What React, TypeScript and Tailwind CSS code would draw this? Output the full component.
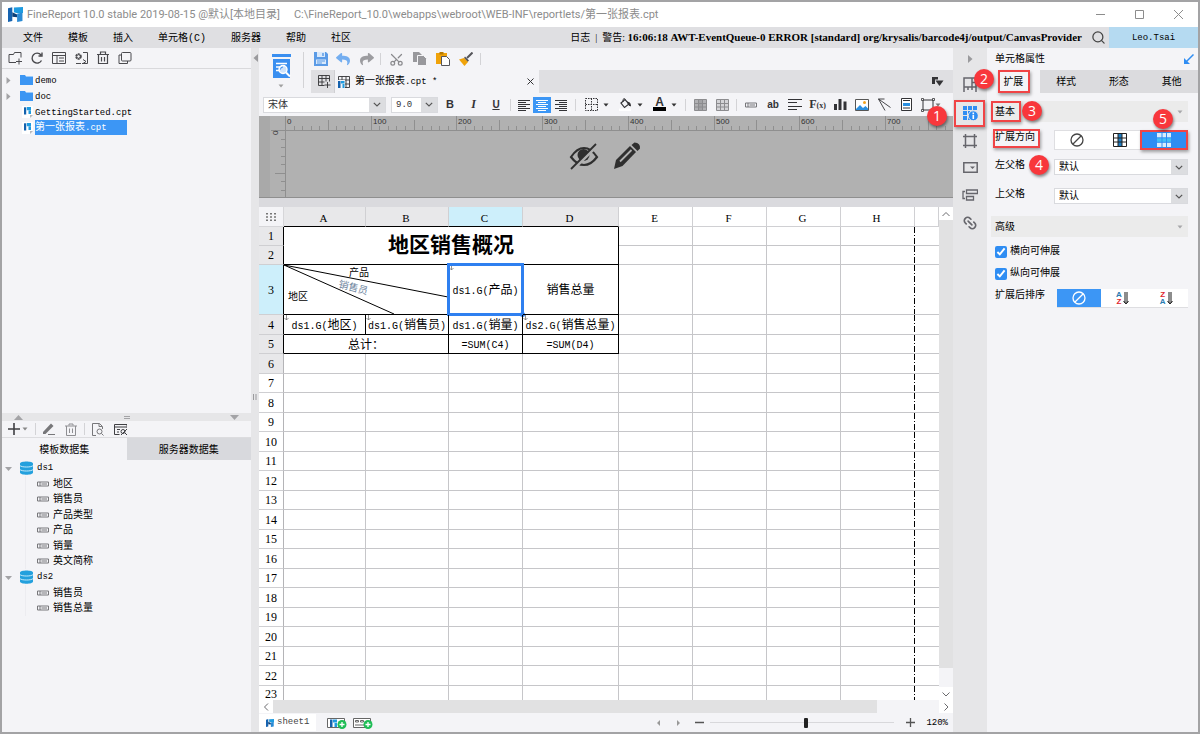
import { Fragment, useState } from 'react';
import type { ReactNode } from 'react';
import { FaReply, FaShare } from 'react-icons/fa';
import { Link2, Scissors, Search } from 'lucide-react';

const MONO = "font-['Liberation_Mono','Noto_Sans_CJK_SC',monospace]";

/** Sets Latin runs smaller than the Chinese text around them. */
function Mixed({ text, latin = 'text-[9px]' }: { text: string; latin?: string }) {
  return (
    <>
      {text.split(/([\x20-\x7e]+)/).map((part, i) =>
        i % 2 ? (
          <span key={i} className={latin}>
            {part}
          </span>
        ) : (
          <Fragment key={i}>{part}</Fragment>
        ),
      )}
    </>
  );
}

function IconButton({ label, className = 'h-full w-[22px]', children }: { label: string; className?: string; children: ReactNode }) {
  return (
    <button type="button" aria-label={label} className={`flex shrink-0 items-center justify-center ${className}`}>
      {children}
    </button>
  );
}

function Svg({ w = 14, h = 14, children, className = '' }: { w?: number; h?: number; children: ReactNode; className?: string }) {
  return (
    <svg width={w} height={h} viewBox={`0 0 ${w} ${h}`} fill="none" stroke="currentColor" className={`shrink-0 ${className}`} aria-hidden="true">
      {children}
    </svg>
  );
}

function Sep({ className = 'mx-[3px] h-3' }: { className?: string }) {
  return <span className={`w-px shrink-0 bg-[#d3d3d6] ${className}`} />;
}

function Caret({ className = 'text-[#333]' }: { className?: string }) {
  return (
    <Svg w={6} h={4} className={className}>
      <path d="M0.5 0.5h5L3 3.5z" fill="currentColor" stroke="none" />
    </Svg>
  );
}

function Chevron() {
  return (
    <Svg w={8} h={5} className="text-[#555]">
      <path d="M0.8 0.8L4 4l3.2-3.2" strokeWidth="1.2" />
    </Svg>
  );
}

function Badge({ n, className }: { n: number; className: string }) {
  return (
    <span
      className={`pointer-events-none absolute z-20 flex size-5 items-center justify-center rounded-full bg-[#f8373c] font-['Open_Sans',sans-serif] text-[14px] leading-none text-white shadow-[1px_2px_3px_rgba(0,0,0,0.45)] ${className}`}
    >
      {n}
    </span>
  );
}

function Frame({ className }: { className: string }) {
  return <span className={`pointer-events-none absolute z-10 border-2 border-[#f04446] shadow-[1px_2px_3px_rgba(0,0,0,0.35)] ${className}`} />;
}

function Logo({ size = 14 }: { size?: number }) {
  return (
    <svg width={size} height={size} viewBox="0 0 14 14" aria-hidden="true" className="shrink-0">
      <path d="M0 1.2L4 0.2V13L0 14z" fill="#1663b0" />
      <path d="M4 5L8.500 7V9.500L4 9z" fill="#0c3f77" />
      <path d="M5.500 0.500L14 0V5.500L9.500 6L5.500 5z" fill="#1e9be0" />
      <path d="M8.500 6.500L13.500 5V13L8.500 14z" fill="#2a8ad4" />
    </svg>
  );
}

/* ---------- Title and menu ---------- */

function TitleBar() {
  return (
    <header className="flex h-[25px] shrink-0 items-center bg-white pl-[6px] font-['Roboto','Noto_Sans_CJK_SC',sans-serif] text-[11px] text-[#8c8c8c]">
      <Logo size={15} />
      <h1 className="ml-1 whitespace-pre">FineReport 10.0 stable 2019-08-15 @默认[本地目录]</h1>
      <span className="ml-[14px] whitespace-pre">C:\FineReport_10.0\webapps\webroot\WEB-INF\reportlets/第一张报表.cpt</span>
      <div className="ml-auto flex h-full">
        <IconButton label="最小化" className="h-full w-[39px]"><Svg w={9} h={9}><path d="M0 4.5h9" /></Svg></IconButton>
        <IconButton label="最大化" className="h-full w-[39px]"><Svg w={9} h={9}><path d="M0.5 0.5h8v8h-8z" /></Svg></IconButton>
        <IconButton label="关闭" className="h-full w-[39px]"><Svg w={9} h={9}><path d="M0 0l9 9M9 0L0 9" /></Svg></IconButton>
      </div>
    </header>
  );
}

const MENUS = ['文件', '模板', '插入', '单元格(C)', '服务器', '帮助', '社区'];

function MenuBar() {
  return (
    <nav className="flex h-[21px] shrink-0 items-center bg-[#dfdfe2] pl-[21px]">
      <div className="flex gap-[25px] pt-[2px]">
        {MENUS.map((m) => (
          <button key={m} type="button" className="whitespace-nowrap">
            <Mixed text={m} latin="text-[10px]" />
          </button>
        ))}
      </div>
      <p className="ml-auto whitespace-pre font-['Liberation_Serif','Noto_Sans_CJK_SC',serif]">
        日志{'  |  '}警告: <b className="text-[11px]">16:06:18 AWT-EventQueue-0 ERROR [standard] org/krysalis/barcode4j/output/CanvasProvider</b>
      </p>
      <IconButton label="搜索" className="ml-[5px] h-full w-[22px]"><Search size={15} strokeWidth={2} className="text-[#444]" /></IconButton>
      <button type="button" className="h-full w-[89px] bg-[#b5daf1] pt-[2px] text-[9px]">Leo.Tsai</button>
    </nav>
  );
}

/* ---------- Left side ---------- */

function TreeArrow({ open = false }: { open?: boolean }) {
  return (
    <Svg w={7} h={7} className="text-[#a3a3a6]">
      <path d={open ? 'M0 2h7L3.5 6z' : 'M1.5 0v7L5.5 3.5z'} fill="currentColor" stroke="none" />
    </Svg>
  );
}

function FolderIcon() {
  return (
    <Svg w={13} h={12} className="text-[#3c96f3]">
      <path d="M0 1h5l1 1.5h7V11H0z" fill="currentColor" stroke="none" />
      <path d="M6 2.5h7" stroke="#9ccaf8" />
    </Svg>
  );
}

function ReportIcon() {
  return (
    <svg width="11" height="12" viewBox="0 0 11 12" aria-hidden="true">
      <path d="M0 0h11v8l-3 4H0z" fill="#fff" />
      <path d="M2 1.3h2.200v7.200H2z" fill="#1461ad" />
      <path d="M4.800 1h4.200v3.200H4.800zM6.500 4.500H9v3.500H6.500z" fill="#1e9be0" />
      <path d="M8 12V9h3z" fill="#b8b8bb" />
    </svg>
  );
}

function FileTree() {
  const rows = [
    { name: 'demo', folder: true },
    { name: 'doc', folder: true },
    { name: 'GettingStarted.cpt', folder: false },
    { name: '第一张报表.cpt', folder: false, selected: true },
  ];
  return (
    <section className="flex h-[365px] shrink-0 flex-col">
      <div className="flex h-[21px] shrink-0 items-center border-b border-[#d9d9dc] pl-[2px] text-[#4a4a4e]">
        <IconButton label="新建文件夹"><Svg><path d="M8 11.500H1v-8h4.500M5.500 3.500l1-2H13v5M11 7.500v6M8 10.500h6" /></Svg></IconButton>
        <IconButton label="刷新"><Svg><path d="M11.500 9.500A5 5 0 1 1 11 4M12 1.500V5H8.500" strokeWidth="1.400" /></Svg></IconButton>
        <IconButton label="定位"><Svg><path d="M.5 1.500h13v11H.5zM.5 4.500h13M5 4.500v8M7 7h5M7 10h5" /></Svg></IconButton>
        <IconButton label="设置"><Svg><circle cx="4.500" cy="5.500" r="2.500" strokeWidth="1.600" strokeDasharray="2 .7" /><circle cx="4.500" cy="5.500" r="1.800" /><path d="M9 1.500h4.500v11H8M2 12.500h5M9 8.500l3 2-3 2" /></Svg></IconButton>
        <IconButton label="删除"><Svg><path d="M1 3.500h12M4.500 3V1h5v2M2.500 3.500v9h9v-9M5.500 6v4.500M8.500 6v4.500" strokeWidth="1.200" /></Svg></IconButton>
        <IconButton label="复制"><Svg><path d="M3.500 4H1v8.500h8.500V10" /><rect x="3.500" y="1.500" width="9.500" height="8.500" rx="1" /></Svg></IconButton>
      </div>
      <ul className="pt-[3px]">
        {rows.map((r) => (
          <li key={r.name} className="flex h-[16px] items-center pl-[3px] last:h-[15px]">
            <span className="flex w-[15px]">{r.folder && <TreeArrow />}</span>
            <span className="flex w-[15px] items-center">{r.folder ? <FolderIcon /> : <span className="pl-[2px]"><ReportIcon /></span>}</span>
            <span className={`h-[15px] pr-[20px] leading-[15px] ${r.selected ? 'bg-[#3c96f5] text-white' : ''}`}>
              <Mixed text={r.name} />
            </span>
          </li>
        ))}
      </ul>
    </section>
  );
}

const DATASETS = [
  { name: 'ds1', fields: ['地区', '销售员', '产品类型', '产品', '销量', '英文简称'] },
  { name: 'ds2', fields: ['销售员', '销售总量'] },
];

function FieldIcon({ className = 'text-[#77777a]' }: { className?: string }) {
  return <Svg w={12} h={6} className={className}><path d="M.5 1h11v4H.5zM3 1v4M4.500 3H10" /></Svg>;
}

function Datasets() {
  return (
    <section className="min-h-0 flex-1">
      <div className="flex h-[17px] items-center border-b border-[#dcdcdf] pl-[6px] text-[#3f3f43]">
        <IconButton label="添加数据集" className="h-full w-5 gap-[2px]">
          <Svg w={12} h={12}><path d="M6 0v12M0 6h12" strokeWidth="1.600" /></Svg>
          <Caret className="text-[#888]" />
        </IconButton>
        <Sep className="mx-[7px] h-3" />
        <IconButton label="编辑" className="h-full w-[11px]"><Svg w={12} h={12} className="text-[#77777a]"><path d="M0 9L8 0.500l2.500 2.500L2.500 11H0z" fill="currentColor" stroke="none" /><path d="M5 11.500h7" /></Svg></IconButton>
        <IconButton label="删除" className="ml-[6px] h-full w-[22px]"><Svg w={12} h={13} className="text-[#8e8e92]"><path d="M0 3h12M4 2.500V1h4v1.500M1.500 3v9.500h9V3M4.500 5.500v4.500M7.500 5.500v4.500" /></Svg></IconButton>
        <Sep className="mx-[2px] h-3" />
        <IconButton label="预览"><Svg w={12} h={13} className="text-[#77777a]"><path d="M4 12.500H.5V.5h7l3 3V6M7 .5v3h3" /><circle cx="7.500" cy="8.500" r="2.500" /><path d="M9.500 10.500l2 2" /></Svg></IconButton>
        <IconButton label="缓存设置"><Svg w={13} h={13}><path d="M13 5V1.500H.5v10h5M.5 4h12M3 6.500h3M3 9h2" /><circle cx="9" cy="8.500" r="2" /><path d="M7 12l6-6M11 10l2 2" /></Svg></IconButton>
      </div>
      <div role="tablist" className="grid h-[22px] grid-cols-2">
        <button type="button" role="tab" aria-selected="true" className="pt-[2px]">模板数据集</button>
        <button type="button" role="tab" aria-selected="false" className="bg-[#d8d9dd] pt-[2px]">服务器数据集</button>
      </div>
      <ul>
        {DATASETS.map((d) => (
          <li key={d.name}>
            <div className="flex h-[16px] items-center pl-[3px]">
              <span className="w-[15px]"><TreeArrow open /></span>
              <svg width="13" height="14" viewBox="0 0 13 14" aria-hidden="true">
                <path d="M0 2.500C0-.2 13-.2 13 2.500v9c0 3-13 3-13 0z" fill="#23a0dd" />
                <path d="M0 4.500c1 2 12 2 13 0M0 8.500c1 2 12 2 13 0" fill="none" stroke="#d5effb" strokeWidth=".9" />
              </svg>
              <span className="ml-1 text-[9px]">{d.name}</span>
            </div>
            <ul className="ml-[23px] border-l border-[#ececf0]">
              {d.fields.map((f, i) => (
                <li key={f} className={`flex items-center pl-[11px] ${i % 2 ? 'h-[16px]' : 'h-[15px]'}`}>
                  <FieldIcon />
                  <span className="ml-1 pt-px">{f}</span>
                </li>
              ))}
            </ul>
          </li>
        ))}
      </ul>
    </section>
  );
}

/* ---------- Toolbars ---------- */

function AlignIcon({ kind }: { kind: 'left' | 'center' | 'right' }) {
  const d = {
    left: 'M0 1.500h12M0 3.500h8M0 5.500h12M0 7.500h8M0 9.500h12M0 11.500h8',
    center: 'M0 1.500h12M2 3.500h8M0 5.500h12M2 7.500h8M0 9.500h12M2 11.500h8',
    right: 'M0 1.500h12M4 3.500h8M0 5.500h12M4 7.500h8M0 9.500h12M4 11.500h8',
  }[kind];
  return <Svg w={12} h={12}><path d={d} /></Svg>;
}

function GridIcon({ fill = 'none', mid = 'none' }: { fill?: string; mid?: string }) {
  return (
    <Svg w={13} h={12}>
      <path d="M.5.5h12v11H.5z" fill={fill} />
      <path d="M4.500.5h4v11h-4z" fill={mid} />
      <path d="M.5 4.500h12M.5 8h12" />
    </Svg>
  );
}

function TopTools() {
  return (
    <div className="flex h-[45px] shrink-0">
      <button type="button" aria-label="预览模板" className="flex w-[44px] shrink-0 flex-col items-center gap-[5px] pt-[6px]">
        <svg width="19" height="25" viewBox="0 0 19 25" aria-hidden="true">
          <path d="M0 0h19v3H0zM1 5h17v19H1z" fill="#3a8ff0" />
          <path d="M4 9.500h11M4 13h4M4 16.500h3" stroke="#fff" strokeWidth="1.500" />
          <circle cx="11" cy="15.500" r="4" fill="#cfe3fa" stroke="#fff" strokeWidth="1.400" />
          <path d="M8.500 15.500a2.500 2.500 0 0 1 2.500-2.500" stroke="#3a8ff0" fill="none" />
          <path d="M14 18.500l4 4" stroke="#fff" strokeWidth="2" />
        </svg>
        <Caret className="text-[#a0a0a0]" />
      </button>
      <Sep className="mt-1 h-9" />
      <div className="ml-[7px] flex min-w-0 flex-1 flex-col">
        <div className="flex h-[22px] items-center">
          <IconButton label="保存" className="h-full w-[19px]"><Svg className="text-[#5b9be6]"><path d="M0 0h12l2 2v12H0z" fill="currentColor" stroke="none" /><path d="M3 0h8v5H3zM2 7.500h10V12H2z" fill="#d9e9fb" stroke="none" /><path d="M9 1v3" strokeWidth="1.500" /><path d="M3 9h8M3 11h5" /></Svg></IconButton>
          <IconButton label="撤销" className="h-full w-[26px]"><FaReply size={14} className="text-[#74aef0]" /></IconButton>
          <IconButton label="重做" className="h-full w-[21px]"><FaShare size={14} className="text-[#9c9ca0]" /></IconButton>
          <Sep />
          <IconButton label="剪切" className="h-full w-6"><Scissors size={15} strokeWidth={2} className="rotate-[270deg] text-[#8a8a8e]" /></IconButton>
          <IconButton label="复制" className="h-full w-[23px]"><Svg><path d="M0 0h6l3 3v7H0z" fill="#98989c" stroke="none" /><path d="M4.500 3.500h6l3 3v7h-9z" fill="#98989c" stroke="#f4f4f7" /></Svg></IconButton>
          <IconButton label="粘贴" className="h-full w-[23px]"><Svg><path d="M0 1h11v11H0z" fill="#f0a30a" stroke="none" /><path d="M3.500 0h4v2.500h-4z" fill="#b97a00" stroke="none" /><path d="M5.500 4.500h5l3 3v6h-8z" fill="#fff" stroke="#55555a" /></Svg></IconButton>
          <IconButton label="格式刷" className="h-full w-[23px]"><Svg><path d="M13.500.5L8 6" stroke="#55555a" strokeWidth="2" /><path d="M6 4.500l4 4L8.500 10 5 6z" fill="#55555a" stroke="none" /><path d="M5 6l4 4-3.500 4L0 7.500z" fill="#f0a30a" stroke="none" /></Svg></IconButton>
          <Sep />
        </div>
        <div className="flex h-[23px] items-center bg-[#dfdfe2] text-[#333336]">
          <IconButton label="新建报表" className="h-full w-[23px] pl-[3px]"><Svg w={13} h={13}><path d="M.5.5h11v6M.5.5v10h6M.5 3.500h11M.5 7h6M4 .5v10M8 .5v6M9.500 7v6M6.500 10h6" strokeWidth=".9" /></Svg></IconButton>
          <div className="flex h-full w-[205px] items-center border-l border-[#cfcfd2] bg-[#f4f4f7] pl-[3px] pr-[5px]">
            <Svg w={12} h={12}><path d="M.5.5h11v11h-11zM.5 4h11M.5 8h11M4 .5v11M8 .5v11" strokeWidth=".9" /><path d="M0 4h7v8H0z" fill="#f4f4f7" stroke="none" /><path d="M0 5h2.500v7H0z" fill="#1461ad" stroke="none" /><path d="M3 5h3.500v2.500H3zM4.500 8h2v4h-2z" fill="#1e9be0" stroke="none" /></Svg>
            <span className="ml-[5px] whitespace-nowrap pt-px text-black"><Mixed text="第一张报表.cpt *" /></span>
            <button type="button" aria-label="关闭报表" className="ml-auto"><Svg w={7} h={7}><path d="M.5.5l6 6M6.500.5l-6 6" /></Svg></button>
          </div>
          <IconButton label="标签列表" className="ml-auto mr-1 h-full w-[22px]"><Svg w={12} h={10}><path d="M0 0h6v2.500H3V7H0z" fill="currentColor" stroke="none" /><path d="M3.500 3.500h8L7.500 9z" fill="currentColor" stroke="none" /></Svg></IconButton>
        </div>
      </div>
    </div>
  );
}

function Select({ label, value, options, className, id }: { label?: string; value: string; options: string[]; className: string; id?: string }) {
  return (
    <div className={`relative flex h-4 border border-[#d9dade] bg-white ${className}`}>
      <select id={id} aria-label={label} defaultValue={value} className="h-full w-full appearance-none bg-transparent pl-1 pt-px leading-[13px] outline-none">
        {options.map((o) => (
          <option key={o}>{o}</option>
        ))}
      </select>
      <span className="pointer-events-none absolute inset-y-0 right-0 flex w-4 items-center justify-center bg-[#dcdde0]">
        <Chevron />
      </span>
    </div>
  );
}

function FormatTools() {
  return (
    <div className="flex h-[23px] shrink-0 items-center pl-1 text-[#333336]">
      <Select label="字体" value="宋体" options={['宋体', '黑体']} className="w-[123px] shrink-0" />
      <Select label="字号" value="9.0" options={['9.0', '12.0']} className="ml-[5px] w-[47px] shrink-0 text-[9px]" />
      <IconButton label="加粗" className="h-full w-6"><b className="font-['Liberation_Sans',sans-serif] text-[11px]">B</b></IconButton>
      <IconButton label="斜体" className="h-full w-[23px]"><i className="font-['Liberation_Serif',serif] text-[12px] font-bold">I</i></IconButton>
      <IconButton label="下划线" className="h-full w-[22px]"><u className="font-['Liberation_Sans',sans-serif] text-[10px] font-bold">U</u></IconButton>
      <Sep />
      <IconButton label="左对齐" className="h-full w-[19px]"><AlignIcon kind="left" /></IconButton>
      <button type="button" aria-label="居中" className="flex h-4 w-[18px] shrink-0 items-center justify-center bg-[#3c96f5] text-white"><AlignIcon kind="center" /></button>
      <IconButton label="右对齐" className="h-full w-[19px]"><AlignIcon kind="right" /></IconButton>
      <Sep className="ml-[5px] mr-1 h-3" />
      <IconButton label="边框" className="h-full w-[34px] gap-[5px]"><Svg w={13} h={13}><path d="M.5.5h12v12H.5zM6.500.5v12M.5 6.500h12" strokeDasharray="1.500 1" /></Svg><Caret /></IconButton>
      <IconButton label="填充" className="h-full w-[34px] gap-[5px]"><Svg w={13} h={13}><path d="M2 5l4-3.500L10 6 5.500 9.500z" strokeWidth="1.200" /><path d="M4 4V1.500Q5-.5 6.500 1.500" /><path d="M8.500 4q3 0 3 4-2-.5-2.500-2.500z" fill="currentColor" /><path d="M0 10.500h12V13H0z" fill="#fff" stroke="none" /></Svg><Caret /></IconButton>
      <IconButton label="字体颜色" className="h-full w-[34px] gap-[5px]">
        <span className="border-b-4 border-black px-[2px] font-['Liberation_Sans',sans-serif] text-[12px] font-bold leading-[9px]">A</span>
        <Caret />
      </IconButton>
      <Sep />
      <IconButton label="合并单元格"><span className="text-[#8c8c8f]"><GridIcon fill="#b1b1b4" mid="#a2a2a5" /></span></IconButton>
      <IconButton label="取消合并"><span className="text-[#8c8c8f]"><GridIcon fill="#d4d4d7" /></span></IconButton>
      <Sep />
      <IconButton label="数据列"><FieldIcon /></IconButton>
      <IconButton label="文本"><b className="font-['Liberation_Sans',sans-serif] text-[10px]">ab</b></IconButton>
      <IconButton label="富文本"><Svg w={14} h={13}><path d="M0 1.500h14M0 4.500h9M0 8.500h14M0 11.500h9" /></Svg></IconButton>
      <IconButton label="公式" className="h-full w-[23px]"><span className="whitespace-nowrap font-['Liberation_Serif',serif] text-[12px] font-bold">F<span className="text-[8px]">(x)</span></span></IconButton>
      <IconButton label="图表"><Svg w={13} h={13}><path d="M0 6h3v6H0zM4.500 1h3v11h-3zM9.500 3.500h3V12h-3z" fill="currentColor" stroke="none" /></Svg></IconButton>
      <IconButton label="图片"><Svg><path d="M.5 1.500h13v11H.5z" fill="#fff" stroke="#555" /><path d="M1 11l4-4 3 3 2.500-2 2.500 2.500V12H1z" fill="#2a8fe0" stroke="none" /><circle cx="9.500" cy="4.500" r="1.500" fill="#f4a21c" stroke="none" /></Svg></IconButton>
      <IconButton label="斜线"><Svg w={13} h={13}><path d="M.5 1L7 12.500M.5 1l12 8.500M.5 1h6" strokeWidth=".9" /></Svg></IconButton>
      <IconButton label="子报表"><Svg w={11} h={13}><path d="M.5.5h10v12H.5z" fill="#fff" /><path d="M2 5h7v3H2z" fill="#2a8fe0" stroke="none" /><path d="M2 2.500h7M2 10h7" /></Svg></IconButton>
      <IconButton label="控件" className="h-full w-7"><Svg w={14}><path d="M2 2h10v10H2z" /><path d="M.5.5h2v2h-2zM11.500.5h2v2h-2zM.5 11.500h2v2h-2zM11.500 11.500h2v2h-2z" fill="#f4f4f7" strokeWidth=".8" /></Svg><Caret className="text-[#777]" /></IconButton>
    </div>
  );
}

/* ---------- Canvas ---------- */

function Ruler() {
  const ticks = Array.from({ length: 78 }, (_, i) => i);
  return (
    <div className="relative h-[82px] shrink-0 overflow-hidden bg-[#b1b1b1]">
      <svg width="694" height="82" viewBox="0 0 694 82" className="block" aria-hidden="true">
        <path d="M0 0h11v82H0z" fill="#a9a9a9" />
        <g stroke="#8f8f8f" fill="none">
          <path d="M26 14.500h668M26.500 0v82M12 14.500h14M0 81.500h694" />
          {ticks.map((i) => {
            const x = Math.round(26 + i * 8.57) + 0.5;
            return <path key={i} d={`M${x} 14V${i % 10 === 0 ? 0 : i % 5 === 0 ? 4 : 10}`} />;
          })}
          {[1, 2, 3, 4, 5, 6, 7].map((i) => (
            <path key={i} d={`M26 ${Math.round(14 + i * 8.57) + 0.5}h${i === 5 ? -10 : -4}`} />
          ))}
        </g>
        <g fill="#333" fontFamily="Liberation Sans, sans-serif" fontSize="8">
          {[0, 1, 2, 3, 4, 5, 6, 7].map((i) => (
            <text key={i} x={Math.round(28 + i * 85.7)} y="8">{i * 100}</text>
          ))}
          <text x="-19" y="19" transform="rotate(-90)">0</text>
        </g>
      </svg>
      <div className="absolute left-1/2 top-[26px] flex -translate-x-[37px] gap-[14px] text-[#2f2f2f]">
        <button type="button" aria-label="隐藏">
          <svg width="30" height="28" viewBox="0 0 30 28" aria-hidden="true">
            <path d="M2 15Q8 6 15 6t13 9q-6 8-13 8T2 15z" fill="none" stroke="currentColor" strokeWidth="2.200" />
            <circle cx="14.500" cy="13" r="6" fill="currentColor" />
            <path d="M3.500 28L29 3" stroke="#b1b1b1" strokeWidth="3" />
            <path d="M2 27L27 2" stroke="currentColor" strokeWidth="1.800" />
          </svg>
        </button>
        <button type="button" aria-label="编辑">
          <svg width="28" height="28" viewBox="0 0 28 28" aria-hidden="true">
            <path d="M1 27l2-9L17 4l6 6L9.500 24z" fill="currentColor" />
            <path d="M7 19.500L18.500 8" stroke="#b1b1b1" strokeWidth="1.800" />
            <path d="M18.500 3l3-2.500q6 .5 5.500 6L24.500 9z" fill="currentColor" />
          </svg>
        </button>
      </div>
    </div>
  );
}

const COLS = ['A', 'B', 'C', 'D', 'E', 'F', 'G', 'H', ''];
const CELL = 'border-b border-r border-[#c6c6c9] p-0';
const INK = 'border-b border-r border-black px-0 pb-0 pt-[3px] text-center';

function DownMark() {
  return (
    <Svg w={5} h={6} className="absolute left-0 top-0 text-[#777]">
      <path d="M2.500 0v5M.5 3l2 2 2-2" strokeWidth=".8" />
    </Svg>
  );
}

function DataCell({ text, mark = true }: { text: string; mark?: boolean }) {
  return (
    <td className={`${INK} relative whitespace-nowrap`}>
      {mark && <DownMark />}
      <Mixed text={text} latin="text-[10px]" />
    </td>
  );
}

function Blank({ from = 0 }: { from?: number }) {
  return (
    <>
      {COLS.slice(from).map((c) => (
        <td
          key={c || 'rest'}
          className={c === 'H' ? 'border-b border-b-[#c6c6c9] bg-[repeating-linear-gradient(to_bottom,#000_0_6px,#fff_6px_8px,#000_8px_9px,#fff_9px_11px)] bg-[length:1px_11px] bg-right-top bg-repeat-y p-0' : c ? CELL : 'border-b border-[#c6c6c9] p-0'}
        />
      ))}
    </>
  );
}

function RowHead({ n, on = false }: { n: number; on?: boolean }) {
  return (
    <th
      scope="row"
      className={`border-b border-r border-b-[#cfcfd2] p-0 font-['Liberation_Serif',serif] font-normal ${n <= 5 ? 'border-r-black' : 'border-r-[#b4b4b7]'} ${on ? 'bg-[#cdeffb]' : n <= 6 ? 'bg-[#e8e8ea]' : 'bg-white'}`}
    >
      {n}
    </th>
  );
}

function Sheet() {
  return (
    <table className="w-full table-fixed border-separate border-spacing-0 bg-white text-[12px] leading-[14px]">
      <colgroup>
        <col className="w-[25px]" />
        <col className="w-[82px]" />
        <col className="w-[83px]" />
        <col className="w-[74px]" />
        <col className="w-[96px]" />
        <col className="w-[74px]" />
        <col className="w-[74px]" />
        <col className="w-[74px]" />
        <col className="w-[74px]" />
        <col />
      </colgroup>
      <thead>
        <tr className="h-[20px] font-['Liberation_Serif',serif] text-[11px]">
          <th className="border-r border-b border-[#d6d6d9] bg-[#f4f4f7] p-0">
            <Svg w={11} h={10} className="mx-auto text-[#777]"><path d="M1 1v8M5 1v8M9 1v8" strokeWidth="2" strokeDasharray="1.500 1.700" /></Svg>
          </th>
          {COLS.map((c, i) => (
            <th
              key={c || 'rest'}
              scope="col"
              className={`border-b border-r px-0 pb-0 pr-[2px] pt-[2px] font-normal ${i < 4 ? 'border-b-black' : 'border-b-[#d0d0d3]'} border-r-[#d0d0d3] ${c === 'C' ? 'bg-[#cdeffb]' : i < 4 ? 'bg-[#e8e8ea]' : 'bg-white'}`}
            >
              {c}
            </th>
          ))}
        </tr>
      </thead>
      <tbody>
        <tr className="h-[19px]">
          <RowHead n={1} />
          <td colSpan={4} rowSpan={2} className={`${INK} text-[21px] font-bold leading-[30px]`}>地区销售概况</td>
          <Blank from={4} />
        </tr>
        <tr className="h-[19px]">
          <RowHead n={2} />
          <Blank from={4} />
        </tr>
        <tr className="h-[50px]">
          <RowHead n={3} on />
          <td colSpan={2} className={`${INK} relative text-[10px]`}>
            <svg viewBox="0 0 164 49" className="absolute inset-0 size-full" preserveAspectRatio="none" aria-hidden="true">
              <path d="M0 0l164 32M0 0l110 49" stroke="#000" fill="none" />
            </svg>
            <span className="absolute left-[65px] top-[2px]">产品</span>
            <span className="absolute left-[54px] top-[17px] rotate-[14deg] text-[#6f86a0]">销售员</span>
            <span className="absolute left-1 top-[26px]">地区</span>
          </td>
          <td className={`${INK} relative whitespace-nowrap`}>
            <DownMark />
            <Mixed text="ds1.G(产品)" latin="text-[10px]" />
            <span className="absolute -bottom-[2px] -left-[2px] -right-[2px] -top-[2px] border-[3px] border-[#2f80f0]">
              <span className="absolute -bottom-[4px] -right-[4px] size-[5px] rounded-full bg-[#2f80f0]" />
            </span>
          </td>
          <DataCell text="销售总量" mark={false} />
          <Blank from={4} />
        </tr>
        <tr className="h-[20px]">
          <RowHead n={4} />
          <DataCell text="ds1.G(地区)" />
          <DataCell text="ds1.G(销售员)" />
          <DataCell text="ds1.G(销量)" mark={false} />
          <DataCell text="ds2.G(销售总量)" />
          <Blank from={4} />
        </tr>
        <tr className="h-[19px]">
          <RowHead n={5} />
          <td colSpan={2} className={INK}>总计：</td>
          <DataCell text="=SUM(C4)" mark={false} />
          <DataCell text="=SUM(D4)" mark={false} />
          <Blank from={4} />
        </tr>
        {Array.from({ length: 18 }, (_, i) => (
          <tr key={i} className={i === 17 ? 'h-[16px]' : i % 2 ? 'h-[19px]' : 'h-[20px]'}>
            <RowHead n={i + 6} />
            <Blank />
          </tr>
        ))}
      </tbody>
    </table>
  );
}

function ScrollArrow({ d, label }: { d: string; label: string }) {
  return (
    <button type="button" aria-label={label} className="flex h-[13px] w-[14px] shrink-0 items-center justify-center bg-white">
      <Svg w={8} h={8} className="text-[#6b6b6e]"><path d={d} /></Svg>
    </button>
  );
}

function StatusBar() {
  const [zoom, setZoom] = useState(52);
  return (
    <footer className="flex h-[19px] shrink-0 items-center">
      <button type="button" className="flex h-[17px] w-[57px] items-center gap-[3px] bg-white pl-[7px] text-[9px] text-[#444]">
        <Logo size={8} />
        sheet1
      </button>
      <IconButton label="新建工作表" className="ml-[9px] h-full w-6"><Svg w={20} h={12}><path d="M.5 1.500h17v9H.5z" fill="#fff" stroke="#666" /><path d="M3 2.500h2.500v7.500H3z" fill="#1461ad" stroke="none" /><path d="M6 2.500h4v3H6zM7.500 6H10v4H7.500z" fill="#1e9be0" stroke="none" /><circle cx="15" cy="7.500" r="4.500" fill="#1ebd55" stroke="none" /><path d="M15 5v5M12.500 7.500h5" stroke="#fff" strokeWidth="1.300" /></Svg></IconButton>
      <IconButton label="新建聚合块" className="ml-[2px] h-full w-6"><Svg w={20} h={12}><path d="M.5 1.500h17v9H.5z" fill="#fff" stroke="#666" /><path d="M2.500 3.500h3v1.500h-3zM7.500 3.500h3v1.500h-3zM2 8h9" stroke="#666" /><circle cx="15" cy="7.500" r="4.500" fill="#1ebd55" stroke="none" /><path d="M15 5v5M12.500 7.500h5" stroke="#fff" strokeWidth="1.300" /></Svg></IconButton>
      <div className="ml-auto flex h-full items-center text-[#555]">
        <IconButton label="上一个" className="h-full w-5"><Svg w={5} h={6} className="text-[#999]"><path d="M4 0v6L1 3z" fill="currentColor" stroke="none" /></Svg></IconButton>
        <IconButton label="下一个" className="h-full w-5"><Svg w={5} h={6} className="text-[#999]"><path d="M1 0v6l3-3z" fill="currentColor" stroke="none" /></Svg></IconButton>
        <IconButton label="缩小"><Svg w={9} h={9}><path d="M0 4.500h9" strokeWidth="1.500" /></Svg></IconButton>
        <input
          type="range"
          aria-label="缩放"
          value={zoom}
          onChange={(e) => setZoom(Number(e.target.value))}
          className="h-3 w-[184px] appearance-none bg-[linear-gradient(#d8d8db,#d8d8db)] bg-[length:100%_1px] bg-center bg-no-repeat [&::-webkit-slider-thumb]:h-[10px] [&::-webkit-slider-thumb]:w-1 [&::-webkit-slider-thumb]:appearance-none [&::-webkit-slider-thumb]:rounded-[1px] [&::-webkit-slider-thumb]:bg-[#222]"
        />
        <IconButton label="放大" className="h-full w-8"><Svg w={9} h={9}><path d="M0 4.500h9M4.500 0v9" strokeWidth="1.300" /></Svg></IconButton>
        <output className="mr-[5px] pt-[2px] text-[9px] text-black">120%</output>
      </div>
    </footer>
  );
}

/* ---------- Right side ---------- */

function SideStrip() {
  return (
    <aside className="flex w-[34px] shrink-0 flex-col items-center bg-[#e6e6e8] text-[#66666c]">
      <IconButton label="收起" className="h-[21px] w-full"><Svg w={6} h={8} className="text-[#9a9a9d]"><path d="M1 0v8l4.500-4z" fill="currentColor" stroke="none" /></Svg></IconButton>
      <div className="relative flex h-[31px] w-full items-center justify-center">
        <button type="button" aria-label="单元格元素"><Svg w={14} h={15}><path d="M1 1h12v9H1zM9 1v9M9 5.500h4M1 10v5M5 10v3M9 10v3M13 10v5" strokeWidth="1.500" /></Svg></button>
        <Badge n={2} className="left-[21px] top-0" />
      </div>
      <div className="relative flex h-[27px] w-full items-center justify-center">
        <button type="button" aria-label="单元格属性">
          <Svg w={15} h={15}>
            <path d="M0 0h4v4H0zM5 0h4v4H5zM10 0h4v4h-4zM0 5h4v4H0zM0 10h4v4H0zM5 5h2v9H5z" fill="#2f8df3" stroke="none" />
            <circle cx="10.300" cy="9.800" r="5" fill="#2f8df3" stroke="#e6e6e8" />
            <path d="M10.300 6.500v1.700M10.300 9v4" stroke="#fff" strokeWidth="1.600" />
          </Svg>
        </button>
        <Frame className="inset-y-0 left-[1px] right-[2px]" />
        <Badge n={1} className="-left-[26px] top-[6px]" />
      </div>
      <IconButton label="悬浮元素" className="h-[27px] w-full"><Svg><path d="M2.500 0v14M11.500 0v14M0 2.500h14M0 11.500h14" strokeWidth="1.500" /></Svg></IconButton>
      <IconButton label="控件设置" className="h-[27px] w-full"><Svg w={15} h={11}><path d="M.8.8h13.400v9.400H.8z" strokeWidth="1.500" /><path d="M7 4.500h5L9.500 7z" fill="currentColor" stroke="none" /></Svg></IconButton>
      <IconButton label="条件属性" className="h-[28px] w-full"><Svg w={16} h={12}><path d="M4.500 1h11v3.500h-11zM4.500 7.500h7V11h-7zM3 2.500H1v7h2" strokeWidth="1.300" /></Svg></IconButton>
      <IconButton label="超级链接" className="h-[27px] w-full"><Link2 size={16} strokeWidth={2.5} className="rotate-45" /></IconButton>
    </aside>
  );
}

function Ban() {
  return <Svg><circle cx="7" cy="7" r="6" strokeWidth="1.300" /><path d="M3 11l8-8" strokeWidth="1.300" /></Svg>;
}

function SortIcon({ top, bottom, topColor, bottomColor }: { top: string; bottom: string; topColor: string; bottomColor: string }) {
  return (
    <span className="flex items-center gap-px">
      <span className="flex flex-col font-['Liberation_Sans',sans-serif] text-[8px] font-bold leading-[7px]">
        <span className={topColor}>{top}</span>
        <span className={bottomColor}>{bottom}</span>
      </span>
      <Svg w={6} h={13} className="text-black"><path d="M2 0v11M4 0v11M.5 9L3 12l2.500-3" strokeWidth=".9" /></Svg>
    </span>
  );
}

function SectionBar({ title, children }: { title: string; children?: ReactNode }) {
  return (
    <div className="relative flex h-[21px] items-center justify-between bg-[#ebebeb] pl-1 pr-[5px]">
      <h2 className="pt-[2px]">{title}</h2>
      <Caret className="text-[#a7a7aa]" />
      {children}
    </div>
  );
}

function Properties() {
  return (
    <aside className="w-[211px] shrink-0">
      <div className="flex h-[22px] items-center justify-between pl-2 pr-1">
        <h2 className="pt-px">单元格属性</h2>
        <button type="button" aria-label="弹出" className="text-[#2f8df3]"><Svg w={10} h={10}><path d="M9.500.5L2 8" strokeWidth="1.500" /><path d="M0 10V4l6 6z" fill="currentColor" stroke="none" /></Svg></button>
      </div>
      <div role="tablist" className="grid h-[23px] grid-cols-4 bg-[#dbdbde]">
        <button type="button" role="tab" aria-selected="true" className="relative bg-[#f4f4f7] pt-px">
          扩展
          <Frame className="inset-y-0 left-[11px] right-[10px]" />
        </button>
        {['样式', '形态', '其他'].map((t) => (
          <button key={t} type="button" role="tab" aria-selected="false" className="pt-px">{t}</button>
        ))}
      </div>
      <div className="pl-1 pr-[10px] pt-2">
        <SectionBar title="基本">
          <Frame className="inset-y-0 left-0 w-[30px]" />
          <Badge n={3} className="left-[31px] top-0" />
        </SectionBar>
        <div className="mt-[8px] flex items-start pl-1">
          <span id="direction" className="relative w-[59px]">
            扩展方向
            <Frame className="-bottom-[3px] -left-[2px] right-[14px] -top-px" />
          </span>
          <div role="group" aria-labelledby="direction" className="relative grid h-[20px] flex-1 grid-cols-[1fr_1fr_46px] border border-[#dedee1] bg-white text-[#444]">
            <IconButton label="不扩展" className="h-full w-full"><Ban /></IconButton>
            <IconButton label="纵向扩展" className="h-full w-full text-[#222]"><Svg><path d="M.5.5h13v13H.5z" fill="#fff" /><path d="M5 .5h4v13H5z" fill="#1f7dc0" /><path d="M.5 5h13M.5 9h13" /></Svg></IconButton>
            <button type="button" aria-label="横向扩展" className="relative flex items-center justify-center bg-[#2f8df3]">
              <Svg><path d="M0 0h14v14H0z" fill="#d9ecfd" stroke="none" /><path d="M0 5h14v4H0z" fill="#43c0f5" stroke="none" /><path d="M5 0v14M9.500 0v14M0 4.800h14M0 9.300h14" stroke="#2f8df3" /></Svg>
              <Frame className="-inset-px" />
              <Badge n={5} className="-top-[22px] left-[12px]" />
            </button>
          </div>
        </div>
        <div className="relative mt-[9px] flex items-start pl-1">
          <label htmlFor="left-parent" className="w-[59px] leading-[13px]">左父格</label>
          <Select id="left-parent" value="默认" options={['默认', '无', '自定义']} className="flex-1" />
          <Badge n={4} className="-top-1 left-[38px]" />
        </div>
        <div className="mt-[13px] flex items-start pl-1">
          <label htmlFor="up-parent" className="w-[59px] leading-[13px]">上父格</label>
          <Select id="up-parent" value="默认" options={['默认', '无', '自定义']} className="flex-1" />
        </div>
        <div className="mt-3"><SectionBar title="高级" /></div>
        <div className="mt-2 flex flex-col gap-[9px] pl-1">
          {['横向可伸展', '纵向可伸展'].map((t) => (
            <label key={t} className="flex h-[13px] items-center gap-[3px]">
              <input type="checkbox" defaultChecked className="m-0 size-3 accent-[#2f8df3]" />
              {t}
            </label>
          ))}
        </div>
        <div className="mt-[9px] flex items-start pl-1">
          <span id="sorting" className="w-[62px] leading-[13px]">扩展后排序</span>
          <div role="group" aria-labelledby="sorting" className="grid h-[19px] flex-1 grid-cols-3 border-b border-[#dedee1] bg-white">
            <IconButton label="不排序" className="h-full w-full bg-[#3c96f5] text-white"><Ban /></IconButton>
            <IconButton label="升序" className="h-full w-full"><SortIcon top="A" bottom="Z" topColor="text-[#2a7ab0]" bottomColor="text-[#e0262e]" /></IconButton>
            <IconButton label="降序" className="h-full w-full"><SortIcon top="Z" bottom="A" topColor="text-[#e0262e]" bottomColor="text-[#2a7ab0]" /></IconButton>
          </div>
        </div>
      </div>
    </aside>
  );
}

export default function App() {
  return (
    <div className={`flex h-screen flex-col overflow-hidden border-2 border-[#a3a3a5] bg-[#f4f4f7] text-[10px] leading-[15px] text-black ${MONO}`}>
      <TitleBar />
      <MenuBar />
      <div className="flex min-h-0 flex-1">
        <div className="flex w-[249px] shrink-0 flex-col">
          <FileTree />
          <div className="flex h-[8px] shrink-0 items-center justify-between bg-[#e6e6e8] px-3 text-[#a3a3a6]">
            <Svg w={9} h={5}><path d="M0 5h9L4.500 0z" fill="currentColor" stroke="none" /></Svg>
            <Svg w={6} h={5}><path d="M0 1.500h6M0 3.500h6" /></Svg>
            <Svg w={9} h={5}><path d="M0 0h9L4.500 5z" fill="currentColor" stroke="none" /></Svg>
          </div>
          <Datasets />
        </div>
        <div className="flex w-[8px] shrink-0 flex-col items-center justify-between bg-[#e6e6e8] pt-[6px] text-[#9a9a9d]">
          <Svg w={5} h={8}><path d="M5 0v8L.5 4z" fill="currentColor" stroke="none" /></Svg>
          <Svg w={4} h={6}><path d="M.5 0v6M3 0v6" /></Svg>
          <span />
        </div>
        <main className="flex min-w-0 flex-1 flex-col">
          <TopTools />
          <FormatTools />
          <Ruler />
          <div className="h-[9px] shrink-0 bg-[#dadade]" />
          <div className="flex min-h-0 flex-1">
            <div className="min-w-0 flex-1 overflow-hidden"><Sheet /></div>
            <div className="flex w-[14px] shrink-0 flex-col">
              <ScrollArrow label="向上滚动" d="M.5 6L4 2.500 7.500 6" />
              <div className="flex-1 pb-[19px]"><div className="h-full bg-[#e1e1e2]" /></div>
              <ScrollArrow label="向下滚动" d="M.5 2.500L4 6l3.500-3.500" />
            </div>
          </div>
          <div className="flex h-[13px] shrink-0">
            <ScrollArrow label="向左滚动" d="M6 .5L2.500 4 6 7.500" />
            <div className="flex-1 pr-[62px]"><div className="h-full bg-[#e1e1e2]" /></div>
            <ScrollArrow label="向右滚动" d="M2.500.5L6 4 2.500 7.500" />
          </div>
          <StatusBar />
        </main>
        <SideStrip />
        <Properties />
      </div>
    </div>
  );
}
